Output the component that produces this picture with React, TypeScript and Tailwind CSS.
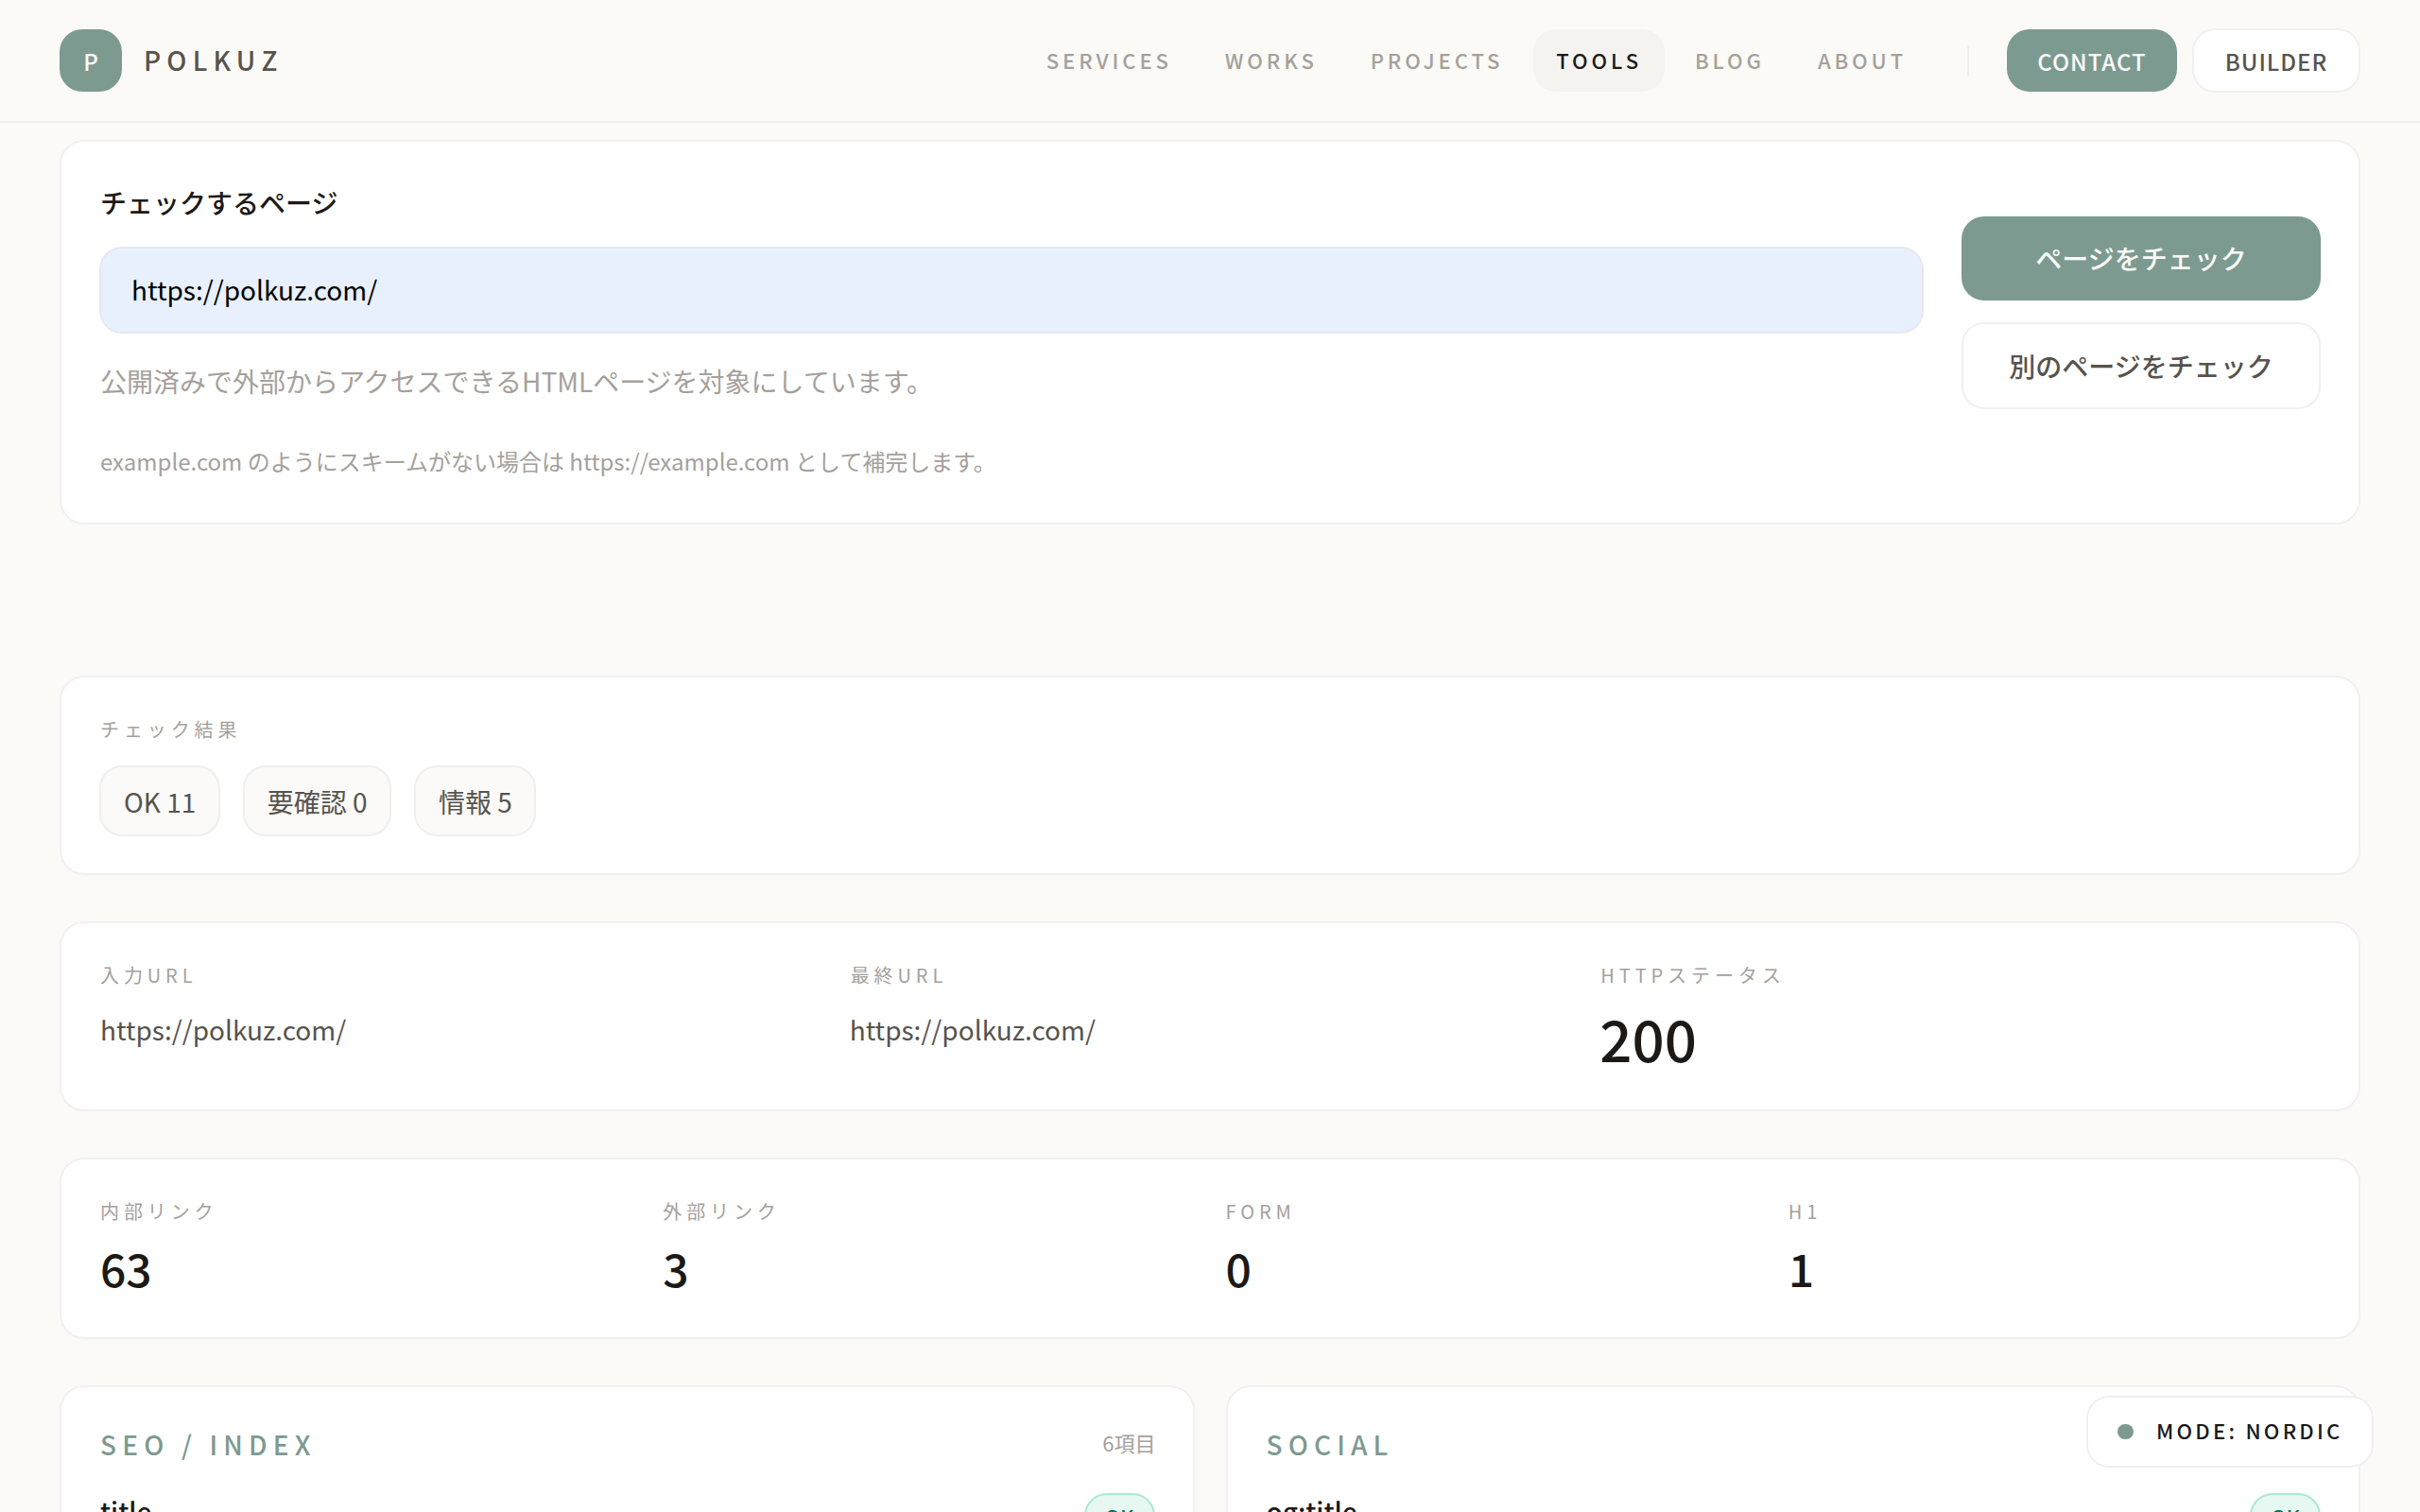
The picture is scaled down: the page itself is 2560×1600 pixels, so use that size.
import type { ReactNode } from 'react';
import clsx from 'clsx';

const NAV_ITEMS = ['SERVICES', 'WORKS', 'PROJECTS', 'TOOLS', 'BLOG', 'ABOUT'];
const ACTIVE_NAV = 'TOOLS';

const SUMMARY = ['OK 11', '要確認 0', '情報 5'];

const COUNTS = [
  { label: '内部リンク', value: 63 },
  { label: '外部リンク', value: 3 },
  { label: 'FORM', value: 0 },
  { label: 'H1', value: 1 },
];

const GROUPS = [
  { title: 'SEO / INDEX', count: '6項目', first: 'title' },
  { title: 'SOCIAL', count: '', first: 'og:title' },
];

function Card({ className, children }: { className?: string; children: ReactNode }) {
  return (
    <section className={clsx('rounded-[26px] border-2 border-[#f1f0f1] bg-white px-10', className)}>
      {children}
    </section>
  );
}

function Label({ children }: { children: ReactNode }) {
  return <p className="pl-px text-[20px] leading-8 tracking-[4.9px] text-stone-400">{children}</p>;
}

function Header() {
  return (
    <header className="flex h-[130px] shrink-0 items-center justify-between border-b-2 border-[#efeeed] bg-[#fbfaf6] px-[63px]">
      <div className="flex items-center gap-[23px]">
        <div className="flex size-[66px] items-center justify-center rounded-[24px] bg-[#7d9a91] pt-0.5 text-[24px] font-medium text-stone-50">
          P
        </div>
        <span className="pb-0.5 text-[28px] font-medium leading-10 tracking-[6.2px] text-stone-600">POLKUZ</span>
      </div>
      <div className="flex items-center">
        <nav className="flex gap-2">
          {NAV_ITEMS.map((item) => (
            <a
              key={item}
              className={clsx(
                'flex h-[66px] items-center rounded-[24px] px-6 pb-0.5 text-[22px] font-medium tracking-[3.92px]',
                item === ACTIVE_NAV ? 'bg-[#f4f3ef] text-stone-900' : 'text-stone-400'
              )}
            >
              {item}
            </a>
          ))}
        </nav>
        <div className="ml-[40px] mr-[40px] h-8 w-0.5 bg-[#f0efed]" />
        <div className="flex items-center gap-4">
          <button
            type="button"
            className="h-[66px] w-[180px] rounded-[24px] bg-[#7d9a91] pt-0.5 text-[24px] font-medium tracking-[1px] text-stone-50"
          >
            CONTACT
          </button>
          <button
            type="button"
            className="h-[68px] w-[178px] rounded-[24px] border-2 border-[#f1f0f1] bg-white pt-0.5 text-[24px] font-medium tracking-[1px] text-stone-600"
          >
            BUILDER
          </button>
        </div>
      </div>
    </header>
  );
}

function CheckForm() {
  return (
    <Card className="flex h-[407px] gap-10 pt-[39px]">
      <div className="flex-1">
        <label className="block pl-px text-[28px] font-medium leading-[50px] text-stone-900">
          チェックするページ
        </label>
        <input
          readOnly
          value="https://polkuz.com/"
          className="mt-[22px] block h-[92px] w-full rounded-[24px] border-2 border-[#e7e8ee] bg-[#e8f0fe] px-8 pb-0.5 text-[28px] text-black outline-none"
        />
        <p className="mt-[25px] pl-px text-[28px] leading-[50px] text-stone-400">
          公開済みで外部からアクセスできるHTMLページを対象にしています。
        </p>
        <p className="mt-[38px] pl-px text-[24px] leading-[43px] text-stone-400">
          example.com のようにスキームがない場合は https://example.com として補完します。
        </p>
      </div>
      <div className="flex w-[380px] flex-col gap-[23px] pt-10">
        <button
          type="button"
          className="h-[89px] rounded-[24px] bg-[#7d9a91] pb-px text-[28px] font-medium text-stone-50"
        >
          ページをチェック
        </button>
        <button
          type="button"
          className="h-[92px] rounded-[24px] border-2 border-[#f1f0f1] bg-white pb-px text-[28px] font-medium text-stone-600"
        >
          別のページをチェック
        </button>
      </div>
    </Card>
  );
}

function ResultGroup({ title, count, first }: { title: string; count: string; first: string }) {
  return (
    <Card className="h-[420px] flex-1 pt-[35px]">
      <div className="flex items-center justify-between">
        <h2 className="pl-px text-[28px] font-medium leading-[50px] tracking-[6.16px] text-[#7d9a91]">{title}</h2>
        <span className="-mr-px pb-[3px] text-[22px] text-stone-400">{count}</span>
      </div>
      <div className="mt-[20px] flex items-start justify-between">
        <h3 className="pl-px pt-px text-[28px] font-medium leading-[50px] text-stone-900">{first}</h3>
        <span className="mt-[7px] flex h-[48px] w-[75px] items-center justify-center rounded-[24px] border-2 border-[#abe9d2] bg-[#e7f8f2] text-[22px] font-medium text-emerald-700">
          OK
        </span>
      </div>
    </Card>
  );
}

function ModeSwitch() {
  return (
    <button
      type="button"
      className="absolute left-[2207px] top-[1477px] flex h-[76px] w-[304px] items-center gap-6 rounded-[24px] border-2 border-[#f1f0f1] bg-white pl-[31px]"
    >
      <span className="h-4 w-[17px] rounded-full bg-[#7d9a91]" />
      <span className="whitespace-nowrap pb-[3px] text-[22px] font-medium tracking-[3.25px] text-stone-900">
        MODE: NORDIC
      </span>
    </button>
  );
}

export default function App() {
  return (
    <div className="relative flex h-[1600px] w-[2560px] flex-col overflow-hidden bg-[#fbfaf6] font-['Noto_Sans_CJK_JP',sans-serif]">
      <Header />
      <main className="px-[63px] pt-[18px]">
        <CheckForm />
        <div className="mt-[160px] flex flex-col gap-[49px]">
          <Card className="h-[211px] pt-[39px]">
            <Label>チェック結果</Label>
            <div className="mt-[22px] flex gap-6">
              {SUMMARY.map((text) => (
                <span
                  key={text}
                  className="flex h-[75px] items-center rounded-[24px] border-2 border-[#f0efee] bg-[#fbfaf9] pl-6 pr-[23.5px] text-[28px] text-stone-600"
                >
                  {text}
                </span>
              ))}
            </div>
          </Card>

          <Card className="grid h-[201px] grid-cols-3 gap-[31px] pt-[39px]">
            <div>
              <Label>入力URL</Label>
              <p className="mt-4 pl-px text-[28px] leading-[50px] text-stone-600">https://polkuz.com/</p>
            </div>
            <div>
              <Label>最終URL</Label>
              <p className="mt-4 text-[28px] leading-[50px] text-stone-600">https://polkuz.com/</p>
            </div>
            <div>
              <Label>HTTPステータス</Label>
              <p className="mt-[14px] text-[60px] font-medium leading-[71px] text-stone-900">200</p>
            </div>
          </Card>

          <Card className="grid h-[192px] grid-cols-4 gap-[31px] pt-[39px]">
            {COUNTS.map(({ label, value }) => (
              <div key={label}>
                <Label>{label}</Label>
                <p className="mt-2.5 pl-px text-[48px] font-medium leading-[67px] text-stone-900">{value}</p>
              </div>
            ))}
          </Card>

          <div className="flex gap-[33px]">
            {GROUPS.map((group) => (
              <ResultGroup key={group.title} {...group} />
            ))}
          </div>
        </div>
      </main>
      <ModeSwitch />
    </div>
  );
}
